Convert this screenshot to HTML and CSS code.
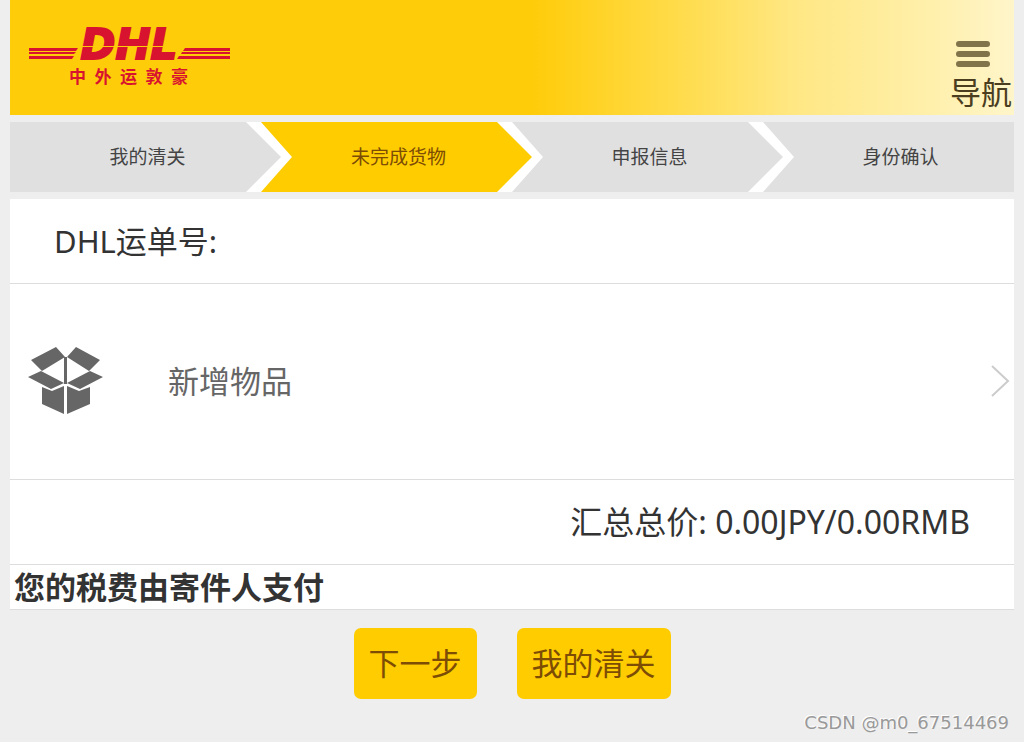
FILE: index.html
```html
<!DOCTYPE html>
<html lang="zh-CN">
<head>
<meta charset="utf-8">
<meta name="viewport" content="width=device-width, initial-scale=1">
<title>DHL 清关</title>
<link rel="stylesheet" href="styles.css">
</head>
<body>
<header class="header">
  <div class="brand">
    <svg class="brand-mark" viewBox="0 0 204 34" role="img" aria-label="DHL">
      <path class="brand-red" d="M1 20h49l-2 3H1zM1 24h47l-2 2H1zM1 28h45l-2 3H1zM157 20h45v3h-47zM154 24h48v2h-49zM151 28h51v3h-53z"/>
      <text class="brand-letters" x="101" y="31" text-anchor="middle">DHL</text>
      <path class="brand-cut" d="M40 18h124v1H40z"/>
    </svg>
    <span class="brand-name">中&ensp;外&ensp;运&ensp;敦&ensp;豪</span>
  </div>
  <button class="nav" type="button">
    <svg class="nav-icon" viewBox="0 0 34 28" aria-hidden="true">
      <path d="M3 4h28M3 14h28M3 24h28"/>
    </svg>
    导航
  </button>
</header>
<nav>
  <ol class="steps">
    <li class="step"><span>我的清关</span></li>
    <li class="step step-active" aria-current="step"><span>未完成货物</span></li>
    <li class="step"><span>申报信息</span></li>
    <li class="step"><span>身份确认</span></li>
  </ol>
</nav>
<main>
  <section class="panel">
    <div class="row">DHL运单号:</div>
    <a class="row add" href="#">
      <svg class="box" viewBox="0 0 76 68" aria-hidden="true">
        <path d="M28 0 37 10 14 24 3 13zM48 0 72 13 61 24 39 10zM13 24 36 36 23 42 0 30zM62 24 75 30 52 42 39 36zM36 10h3v27h-3zM14 40 24 44 36 39V67L14 57zM39 39 51 44 62 40V57L39 67z"/>
      </svg>
      <span class="add-label">新增物品</span>
      <svg class="arrow" viewBox="0 0 20 34" aria-hidden="true"><path d="M2 2 18 17 2 32"/></svg>
    </a>
    <div class="row total">汇总总价: 0.00JPY/0.00RMB</div>
    <strong class="notice">您的税费由寄件人支付</strong>
  </section>
  <div class="actions">
    <button class="action" type="button">下一步</button>
    <button class="action" type="button">我的清关</button>
  </div>
</main>
<footer class="watermark">CSDN @m0_67514469</footer>
</body>
</html>
```
FILE: styles.css
```css
* {
  box-sizing: border-box;
}

body {
  display: flex;
  flex-direction: column;
  min-height: 100vh;
  margin: 0;
  padding: 0 10px;
  background: #eee;
  color: #333;
  font: 31px/44px "Noto Sans", "Noto Sans CJK SC", sans-serif;
}

button {
  border: 0;
  font: inherit;
  cursor: pointer;
}

.header {
  display: flex;
  justify-content: space-between;
  padding: 28px 0 0 18px;
  height: 115px;
  background: linear-gradient(90deg, #ffcc0a 52%, #ffdb48 66%, #ffe783 78%, #fff0ac 92%, #fff5ca);
}

.brand-mark {
  display: block;
  width: 204px;
  height: 34px;
  overflow: visible;
}

.brand-red {
  fill: #d8132f;
}

.brand-letters {
  fill: #d8132f;
  stroke: #d8132f;
  stroke-width: 2px;
  font: italic bold 42px "DejaVu Sans", sans-serif;
}

.brand-cut {
  fill: #ffcc0a;
}

.brand-name {
  display: block;
  padding-left: 41px;
  color: #d8132f;
  font: bold 17px/28px "Noto Sans CJK SC", sans-serif;
}

.nav {
  display: flex;
  flex-direction: column;
  align-items: center;
  padding: 12px 2px 0 0;
  background: none;
  color: #4a3d20;
  line-height: 48px;
}

.nav-icon {
  width: 34px;
  height: 28px;
  margin-right: 16px;
  flex: none;
  fill: none;
  stroke: #81734a;
  stroke-width: 6px;
  stroke-linecap: round;
}

.steps {
  display: flex;
  margin: 7px 0;
  padding: 0;
  height: 70px;
  background: #fff;
  list-style: none;
}

.step {
  position: relative;
  display: flex;
  flex: 1;
  align-items: center;
  justify-content: center;
  padding-left: 24px;
  color: #444;
  font-size: 19px;
}

.step::before {
  content: "";
  position: absolute;
  inset: 0 -20px 0 0;
  background: #e0e0e1;
  clip-path: polygon(0 0, calc(100% - 35px) 0, 100% 50%, calc(100% - 35px) 100%, 0 100%, 31px 50%);
}

.step:first-child::before {
  clip-path: polygon(0 0, calc(100% - 35px) 0, 100% 50%, calc(100% - 35px) 100%, 0 100%);
}

.step:last-child::before {
  right: 0;
  clip-path: polygon(0 0, 100% 0, 100% 100%, 0 100%, 31px 50%);
}

.step span {
  position: relative;
}

.step-active {
  color: #7d4c05;
}

.step-active::before {
  background: #fc0;
}

.panel {
  border-bottom: 1px solid #ddd;
  background: #fff;
}

.row {
  padding: 20px 44px;
  border-bottom: 1px solid #ddd;
}

.add {
  display: flex;
  align-items: center;
  padding: 63px 4px 64px 18px;
  color: #666;
  text-decoration: none;
}

.box {
  width: 76px;
  height: 68px;
  fill: #666;
}

.add-label {
  flex: 1;
  padding-left: 64px;
}

.arrow {
  width: 20px;
  height: 34px;
  fill: none;
  stroke: #ccc;
  stroke-width: 2px;
}

.total {
  font-size: 32px;
  text-align: right;
}

.notice {
  display: block;
  padding-left: 4px;
}

.actions {
  display: flex;
  flex-wrap: wrap;
  justify-content: center;
  gap: 40px;
  padding-top: 18px;
}

.action {
  padding: 13px 15px 14px;
  border-radius: 7px;
  background: #fc0;
  color: #7d4c05;
}

.watermark {
  margin-top: auto;
  padding: 0 5px 6px 0;
  color: #999;
  font: 18px/26px "DejaVu Sans", sans-serif;
  text-align: right;
  text-shadow: -1px -1px #fff;
}
```
